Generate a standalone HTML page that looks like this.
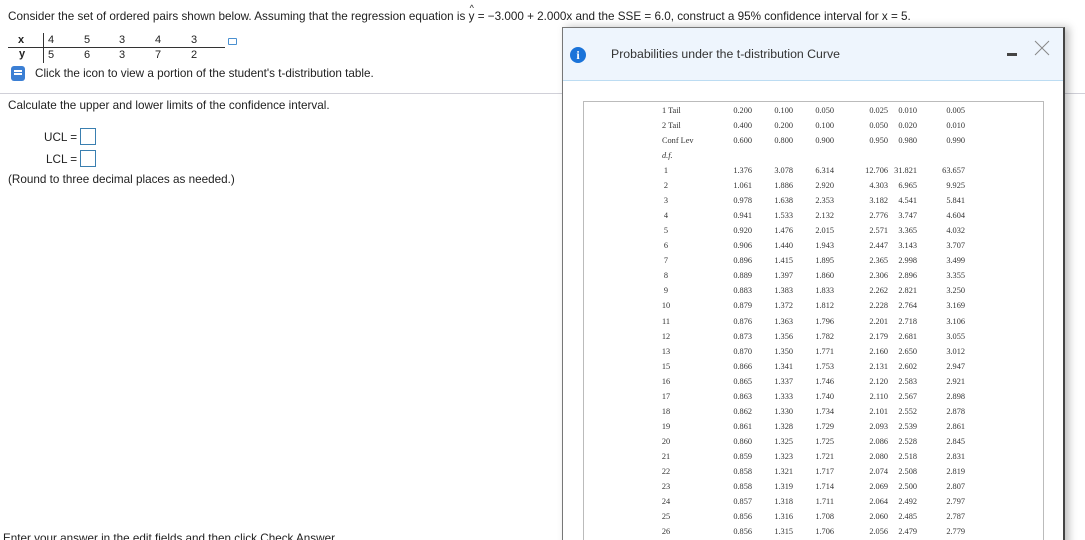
<!DOCTYPE html>
<html style="margin:0;width:1085px;height:540px;overflow:hidden"><head><style>
body{margin:0;width:1085px;height:540px;overflow:hidden;background:#fff;font-family:"Liberation Sans",Arial,sans-serif;color:#222;position:relative}
.a{position:absolute;white-space:nowrap}
.f{font-size:11.7px}
.t{position:absolute;font-family:"Liberation Serif",serif;font-size:8.3px;color:#333;white-space:nowrap}
.r{text-align:right;width:60px}
.box{position:absolute;width:14px;height:15px;border:1px solid #3a7fb0;background:#fff}
</style></head><body>
<div class="a f" style="left:8px;top:10px">Consider the set of ordered pairs shown below. Assuming that the regression equation is <span style="position:relative">y<span style="position:absolute;left:1px;top:-7px;font-size:9px">^</span></span> = &minus;3.000 + 2.000x and the SSE = 6.0, construct a 95% confidence interval for x = 5.</div>
<div class="a" style="left:18px;top:34px;font-size:11px;font-weight:bold">x</div>
<div class="a" style="left:19px;top:48px;font-size:11px;font-weight:bold">y</div>
<div class="a" style="left:43px;top:33px;width:1px;height:30px;background:#333"></div>
<div class="a" style="left:8px;top:47px;width:217px;height:1px;background:#333"></div>
<div class="a" style="left:48px;top:34px;font-size:11px">4</div><div class="a" style="left:84px;top:34px;font-size:11px">5</div><div class="a" style="left:119px;top:34px;font-size:11px">3</div><div class="a" style="left:155px;top:34px;font-size:11px">4</div><div class="a" style="left:191px;top:34px;font-size:11px">3</div>
<div class="a" style="left:48px;top:49px;font-size:11px">5</div><div class="a" style="left:84px;top:49px;font-size:11px">6</div><div class="a" style="left:119px;top:49px;font-size:11px">3</div><div class="a" style="left:155px;top:49px;font-size:11px">7</div><div class="a" style="left:191px;top:49px;font-size:11px">2</div>
<div class="a" style="left:228px;top:38px;width:7px;height:5px;border:1px solid #4a90d0;border-radius:1px"></div>
<div class="a" style="left:11px;top:66px;width:14px;height:15px;background:#3b7fd4;border-radius:3px"></div>
<div class="a" style="left:14px;top:70px;width:8px;height:1.5px;background:#fff"></div><div class="a" style="left:14px;top:73px;width:8px;height:1.5px;background:#fff"></div>
<div class="a f" style="left:35px;top:67px">Click the icon to view a portion of the student's t-distribution table.</div>
<div class="a" style="left:0;top:93px;width:1085px;height:1px;background:#d0d0d8"></div>
<div class="a f" style="left:8px;top:99px">Calculate the upper and lower limits of the confidence interval.</div>
<div class="a f" style="left:44px;top:131px">UCL =</div><div class="box" style="left:80px;top:128px"></div>
<div class="a f" style="left:46px;top:153px">LCL =</div><div class="box" style="left:80px;top:150px"></div>
<div class="a f" style="left:8px;top:173px">(Round to three decimal places as needed.)</div>
<div class="a f" style="left:3px;top:532px">Enter your answer in the edit fields and then click Check Answer.</div>
<!-- modal -->
<div class="a" style="left:562px;top:27px;width:500px;height:520px;background:#fff;border:1px solid #777;border-right:2px solid #444;box-shadow:4px 0 8px rgba(0,0,0,.25)"></div>
<div class="a" style="left:563px;top:28px;width:500px;height:52px;background:#eef5fd;border-bottom:1px solid #bcdcf2"></div>
<div class="a" style="left:570px;top:47px;width:16px;height:16px;border-radius:50%;background:#1a73d9;color:#fff;font:bold 12px/16px 'Liberation Serif',serif;text-align:center">i</div>
<div class="a" style="left:611px;top:47px;font-size:12.3px;color:#333">Probabilities under the t-distribution Curve</div>
<div class="a" style="left:1007px;top:53px;width:10px;height:3px;background:#444"></div>
<svg class="a" style="left:1034px;top:40px" width="16" height="16"><path d="M1 1L15 15M15 1L1 15" stroke="#888" stroke-width="1"/></svg>
<div class="a" style="left:583px;top:101px;width:459px;height:460px;border:1px solid #bbb"></div>
<div id="tb"></div>
<script>
var rows=[["1 Tail","0.200","0.100","0.050","0.025","0.010","0.005"],["2 Tail","0.400","0.200","0.100","0.050","0.020","0.010"],["Conf Lev","0.600","0.800","0.900","0.950","0.980","0.990"],["<i>d.f.</i>","","","","","",""],
["1","1.376","3.078","6.314","12.706","31.821","63.657"],["2","1.061","1.886","2.920","4.303","6.965","9.925"],["3","0.978","1.638","2.353","3.182","4.541","5.841"],["4","0.941","1.533","2.132","2.776","3.747","4.604"],["5","0.920","1.476","2.015","2.571","3.365","4.032"],["6","0.906","1.440","1.943","2.447","3.143","3.707"],["7","0.896","1.415","1.895","2.365","2.998","3.499"],["8","0.889","1.397","1.860","2.306","2.896","3.355"],["9","0.883","1.383","1.833","2.262","2.821","3.250"],["10","0.879","1.372","1.812","2.228","2.764","3.169"],["11","0.876","1.363","1.796","2.201","2.718","3.106"],["12","0.873","1.356","1.782","2.179","2.681","3.055"],["13","0.870","1.350","1.771","2.160","2.650","3.012"],["15","0.866","1.341","1.753","2.131","2.602","2.947"],["16","0.865","1.337","1.746","2.120","2.583","2.921"],["17","0.863","1.333","1.740","2.110","2.567","2.898"],["18","0.862","1.330","1.734","2.101","2.552","2.878"],["19","0.861","1.328","1.729","2.093","2.539","2.861"],["20","0.860","1.325","1.725","2.086","2.528","2.845"],["21","0.859","1.323","1.721","2.080","2.518","2.831"],["22","0.858","1.321","1.717","2.074","2.508","2.819"],["23","0.858","1.319","1.714","2.069","2.500","2.807"],["24","0.857","1.318","1.711","2.064","2.492","2.797"],["25","0.856","1.316","1.708","2.060","2.485","2.787"],["26","0.856","1.315","1.706","2.056","2.479","2.779"]];
var ys=[106,121,136,151,166];for(var i=5;i<rows.length;i++)ys.push(166+(i-4)*15.05);
var rx=[752,793,834,888,917,965],h="";
rows.forEach(function(r,i){var y=ys[i];
 if(i<4)h+='<div class="t" style="left:662px;top:'+y+'px">'+r[0]+'</div>';
 else h+='<div class="t" style="left:656px;width:20px;text-align:center;top:'+y+'px">'+r[0]+'</div>';
 for(var c=1;c<7;c++)h+='<div class="t r" style="left:'+(rx[c-1]-60)+'px;top:'+y+'px">'+r[c]+'</div>';});
document.getElementById('tb').innerHTML=h;
</script>
</body></html>
